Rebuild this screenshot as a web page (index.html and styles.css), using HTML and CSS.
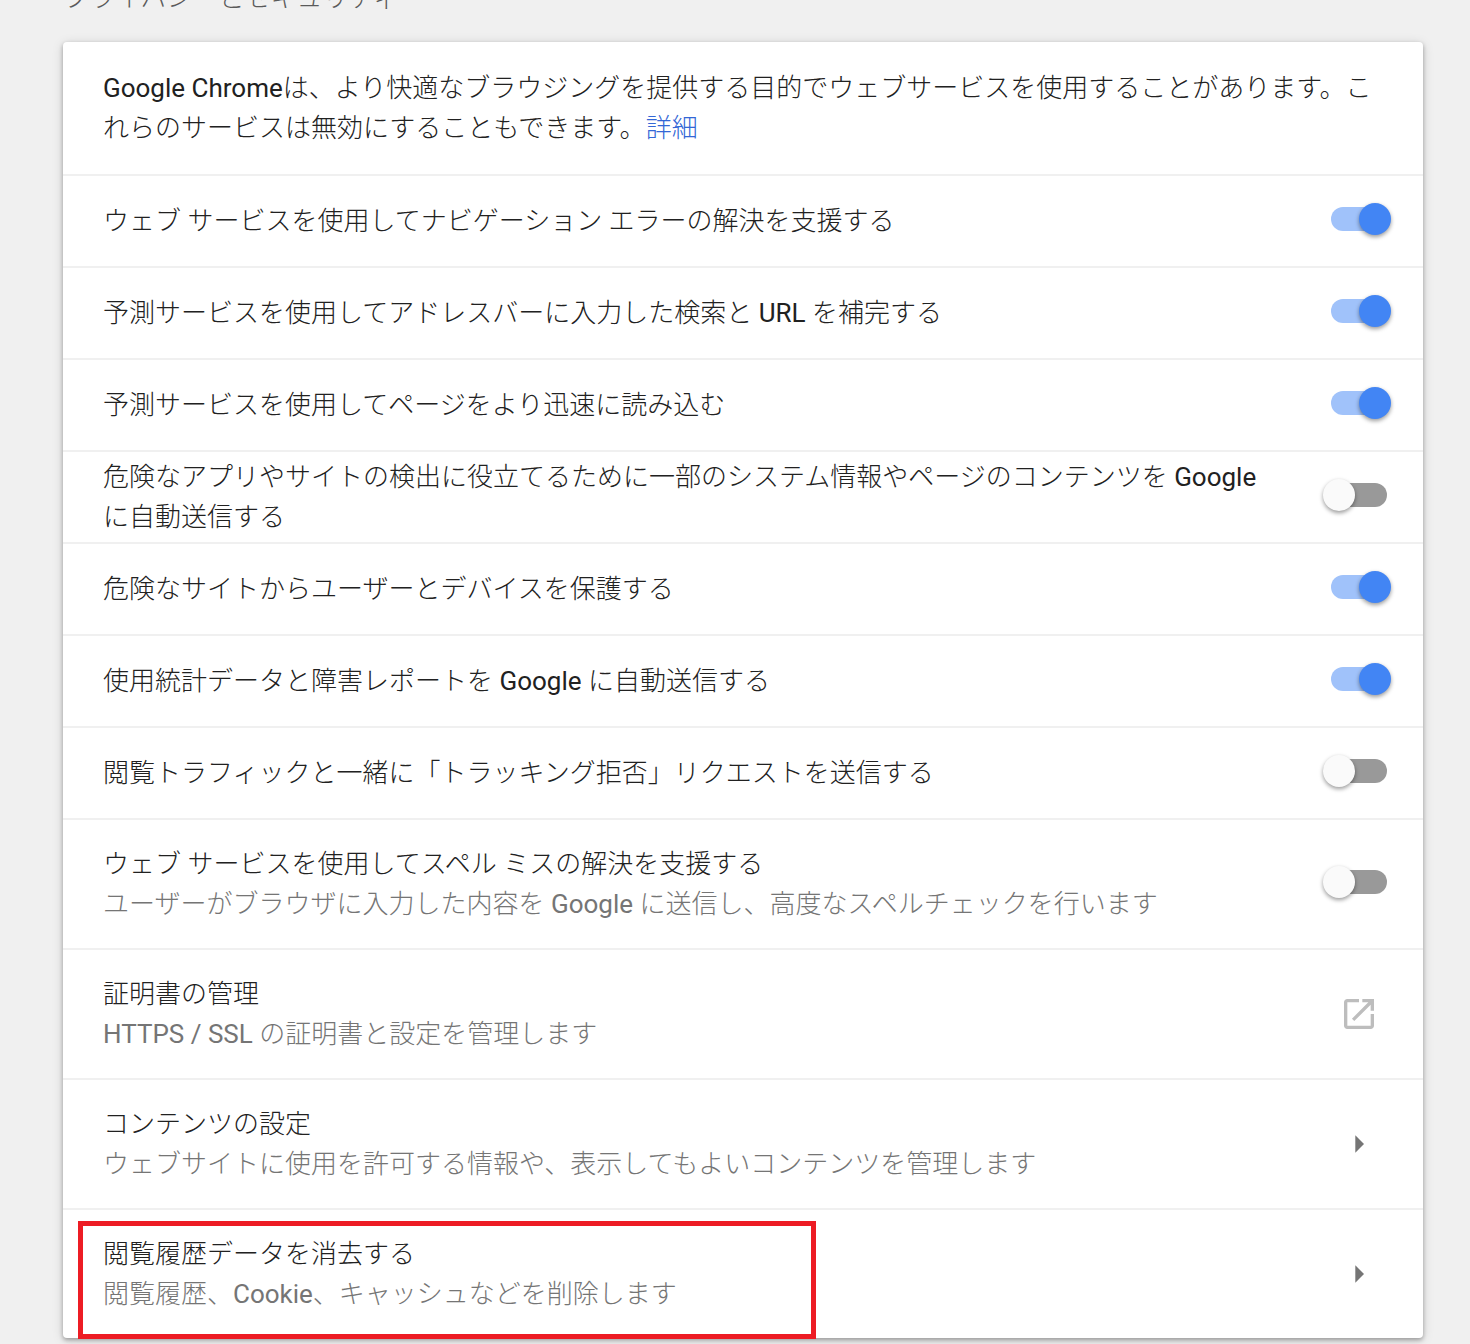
FILE: index.html
```html
<!DOCTYPE html>
<html lang="ja">
<head>
    <meta charset="UTF-8">
    <meta name="viewport" content="width=device-width, initial-scale=1.0">
    <title>設定</title>
    <link rel="stylesheet" href="styles.css">
</head>
<body>
    <main class="settings-section">
        <h2 class="section-title">プライバシーとセキュリティ</h2>

        <div class="card">
            <p class="intro">Google Chromeは、より快適なブラウジングを提供する目的でウェブサービスを使用することがあります。これらのサービスは無効にすることもできます。<a href="#">詳細</a></p>

            <div class="row">
                <label class="label" for="navErrors">ウェブ サービスを使用してナビゲーション エラーの解決を支援する</label>
                <input class="toggle" type="checkbox" id="navErrors" checked>
            </div>
            <div class="row">
                <label class="label" for="searchSuggest">予測サービスを使用してアドレスバーに入力した検索と URL を補完する</label>
                <input class="toggle" type="checkbox" id="searchSuggest" checked>
            </div>
            <div class="row">
                <label class="label" for="prefetch">予測サービスを使用してページをより迅速に読み込む</label>
                <input class="toggle" type="checkbox" id="prefetch" checked>
            </div>
            <div class="row">
                <label class="label" for="extendedReporting">危険なアプリやサイトの検出に役立てるために一部のシステム情報やページのコンテンツを Google に自動送信する</label>
                <input class="toggle" type="checkbox" id="extendedReporting">
            </div>
            <div class="row">
                <label class="label" for="safeBrowsing">危険なサイトからユーザーとデバイスを保護する</label>
                <input class="toggle" type="checkbox" id="safeBrowsing" checked>
            </div>
            <div class="row">
                <label class="label" for="metrics">使用統計データと障害レポートを Google に自動送信する</label>
                <input class="toggle" type="checkbox" id="metrics" checked>
            </div>
            <div class="row">
                <label class="label" for="doNotTrack">閲覧トラフィックと一緒に「トラッキング拒否」リクエストを送信する</label>
                <input class="toggle" type="checkbox" id="doNotTrack">
            </div>
            <div class="row two-line">
                <label class="label" for="spelling">ウェブ サービスを使用してスペル ミスの解決を支援する
                    <span class="secondary">ユーザーがブラウザに入力した内容を Google に送信し、高度なスペルチェックを行います</span>
                </label>
                <input class="toggle" type="checkbox" id="spelling">
            </div>
            <div class="row two-line">
                <div class="label">証明書の管理
                    <span class="secondary">HTTPS / SSL の証明書と設定を管理します</span>
                </div>
                <button class="icon-btn external" aria-label="証明書の管理">
                    <svg viewBox="0 0 24 24"><path d="M19 19H5V5h7V3H5c-1.11 0-2 .9-2 2v14c0 1.1.89 2 2 2h14c1.1 0 2-.9 2-2v-7h-2v7zM14 3v2h3.59l-9.83 9.83 1.41 1.41L19 6.41V10h2V3h-7z"/></svg>
                </button>
            </div>
            <div class="row two-line">
                <div class="label">コンテンツの設定
                    <span class="secondary">ウェブサイトに使用を許可する情報や、表示してもよいコンテンツを管理します</span>
                </div>
                <button class="icon-btn" aria-label="コンテンツの設定">
                    <svg viewBox="0 0 40 40"><path d="M16.300 11.300v17.400l8.700-8.700z"/></svg>
                </button>
            </div>
            <div class="row two-line highlighted">
                <div class="label">閲覧履歴データを消去する
                    <span class="secondary">閲覧履歴、Cookie、キャッシュなどを削除します</span>
                </div>
                <button class="icon-btn" aria-label="閲覧履歴データを消去する">
                    <svg viewBox="0 0 40 40"><path d="M16.300 11.300v17.400l8.700-8.700z"/></svg>
                </button>
            </div>
        </div>
    </main>
</body>
</html>
```
FILE: styles.css
```css
body {
    margin: 0;
    background: #f0f0f0;
    color: #212121;
    font-family: Roboto, 'Noto Sans CJK JP Light', 'Noto Sans CJK JP', sans-serif;
    font-size: 26px;
    line-height: 40px;
}

.settings-section {
    margin: -22px 47px 0 63px;
    padding-bottom: 6px;
}

.section-title {
    margin: 0 0 24px;
    font-size: 26px;
    font-weight: 400;
    color: #5a5a5a;
}

.card {
    background: #ffffff;
    border-radius: 4px;
    box-shadow: 0 2px 4px rgba(0, 0, 0, 0.3), 0 2px 12px rgba(0, 0, 0, 0.14);
}

.intro {
    margin: 0;
    padding: 26px 40px;
}

.intro a {
    color: #3367d6;
    text-decoration: none;
}

.row {
    position: relative;
    display: flex;
    align-items: center;
    min-height: 90px;
    padding: 0 36px 0 40px;
    border-top: 2px solid #f0f0f0;
}

.two-line {
    min-height: 128px;
}

.label {
    flex: 1;
    margin-right: 48px;
}

.secondary {
    display: block;
    color: #757575;
}

/* switches */
.toggle {
    appearance: none;
    position: relative;
    flex: none;
    width: 56px;
    height: 24px;
    margin: 0 0 4px;
    border-radius: 12px;
    background: #999999;
    cursor: pointer;
}

.toggle::before {
    content: "";
    position: absolute;
    top: -4px;
    left: -8px;
    width: 32px;
    height: 32px;
    border-radius: 50%;
    background: #fafafa;
    box-shadow: 0 2px 4px rgba(0, 0, 0, 0.4);
}

.toggle:checked {
    background: #a0c2fa;
}

.toggle:checked::before {
    left: 28px;
    background: #4285f4;
}

.icon-btn {
    flex: none;
    width: 40px;
    height: 40px;
    margin: 0 8px 0 0;
    padding: 0;
    border: none;
    background: none;
    cursor: pointer;
}

.icon-btn svg {
    display: block;
    fill: #757575;
}

.external svg {
    fill: #bdbdbd;
}

/* red frame around the clear-data row */
.highlighted::after {
    content: "";
    position: absolute;
    top: 11px;
    bottom: -1px;
    left: 15px;
    width: 728px;
    border: 5px solid #ed1c24;
    pointer-events: none;
}
```
